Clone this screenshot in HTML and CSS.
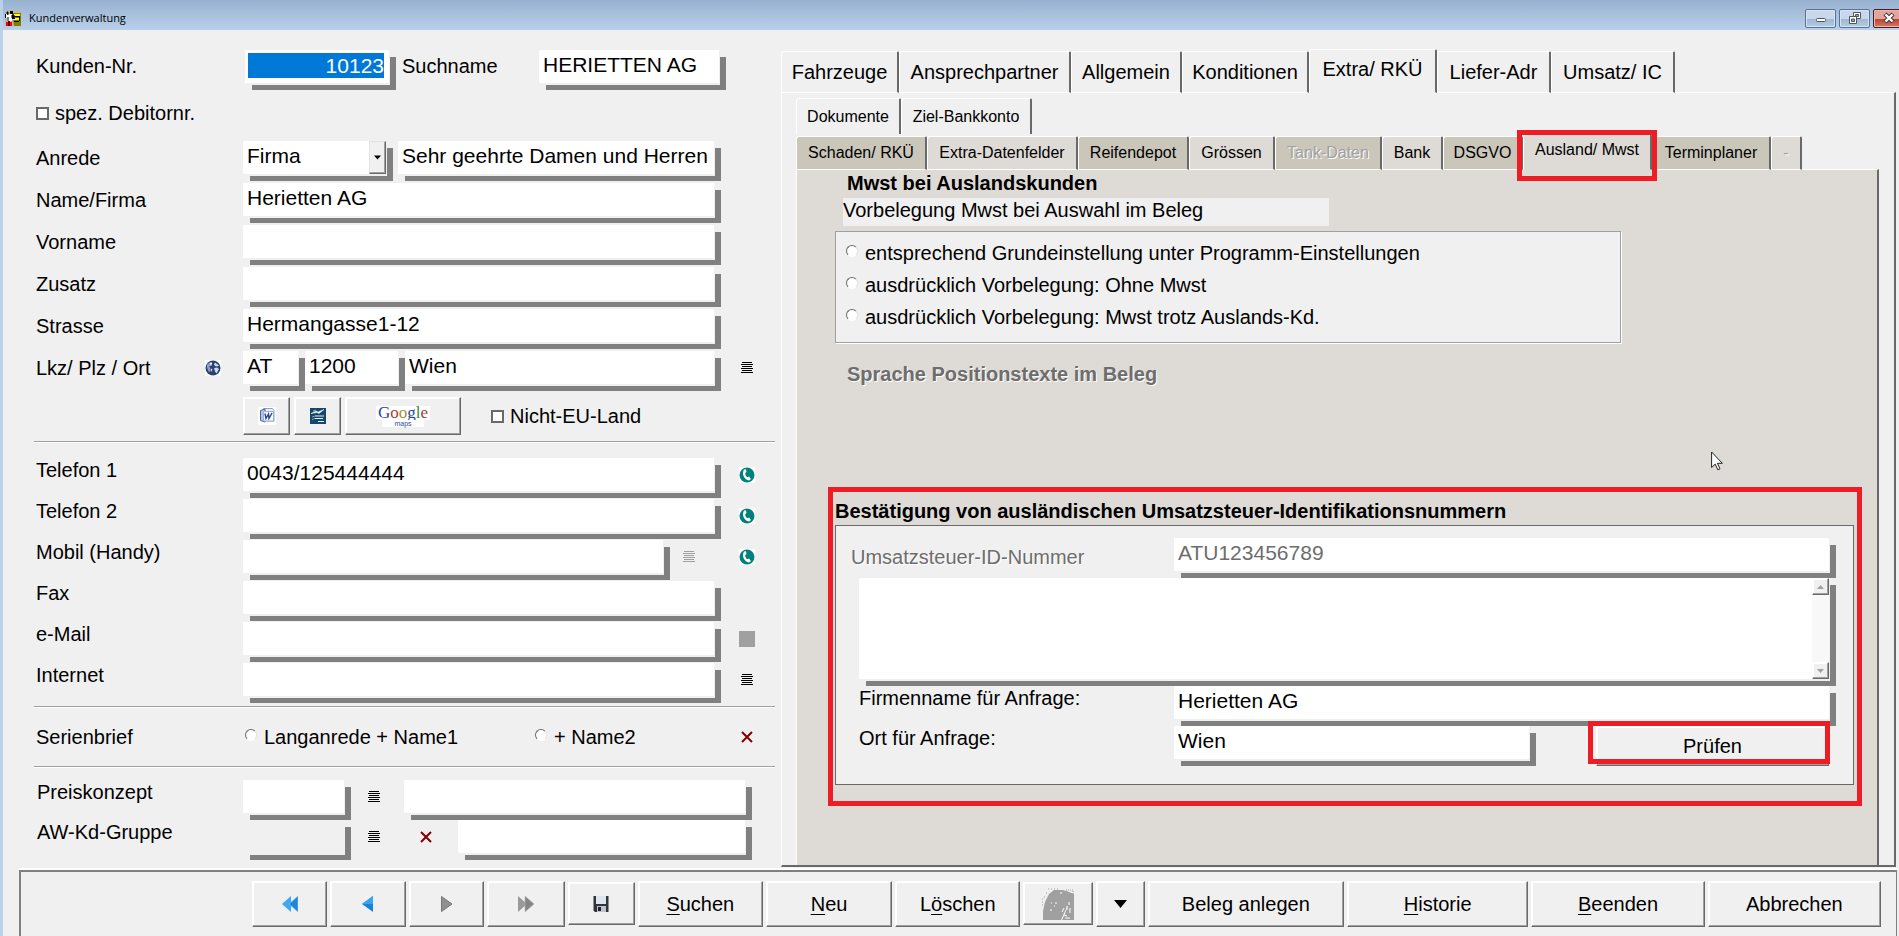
FILE: index.html
```html
<!DOCTYPE html>
<html lang="de">
<head>
<meta charset="utf-8">
<title>Kundenverwaltung</title>
<link rel="stylesheet" href="styles.css">
</head>
<body>
<svg class="sprite" aria-hidden="true">
  <symbol id="i-list" viewBox="0 0 12 12"><path d="M1 .5h10M0 2.5h12M1 4.5h10M0 6.5h12M1 8.5h10M0 10.5h12" stroke="currentColor"/></symbol>
  <symbol id="i-phone" viewBox="0 0 16 16"><path fill="#fff" d="M0 0h16v16H0z"/><circle cx="8" cy="8" r="7.5" fill="#00807c"/><path d="M5 2.500C2.500 7 5 12.500 10 13.500l2-1.500-2-2.500-1.500.7C7 9.500 6 7.500 6.300 6L7.500 5 7 2.300z" fill="#fff"/></symbol>
  <symbol id="i-x" viewBox="0 0 12 12"><path d="M1 1l10 10M11 1L1 11" stroke="#800000" stroke-width="2"/></symbol>
</svg>

<header class="titlebar">
  <svg class="app-icon" viewBox="0 0 16 16"><path fill="#b8b8b0" d="M0 0h16v16H0z"/><path fill="#808000" d="M7 3h9v13H9z"/><path fill="#ff0" d="M9 4h6v2H9zM8 8h6v2H8z"/><path d="M5 1h3v3H5zM9 6h6v1H9zM9 11h5v1H9zM14 6h1v5h-1zM0 4h1v4H0zM7 8h3v1H7z"/><path fill="#fff" d="M1 4h6v7H2V8H1z"/><path d="M2 4V2h1v3M7 5h2v3H7zM3 7v4" stroke="#000"/><path fill="#f00" d="M1 12h2v4H1zM5 12h2v4H5z"/><path fill="#600" d="M3 11h2v5H3z"/></svg>
  <h1>Kundenverwaltung</h1>
  <div class="win-buttons">
    <button class="win" aria-label="Minimieren"><svg viewBox="0 0 12 12"><rect x="1.500" y="6.500" width="9" height="3" rx="1" fill="#fff" stroke="#50555c"/></svg></button>
    <button class="win" aria-label="Wiederherstellen"><svg viewBox="0 0 12 12"><path d="M4.500.5h7v6h-7z" fill="#fff" stroke="#50555c"/><path d="M6.500 2.500h3v2h-3z" fill="#8ba5c4" stroke="#50555c"/><path d="M.5 4.500h7v7h-7z" fill="#fff" stroke="#50555c"/><path d="M2.500 7h3v2.500h-3z" fill="#8ba5c4" stroke="#50555c"/></svg></button>
    <button class="win win-close" aria-label="Schließen"><svg viewBox="0 0 12 12"><path d="M2 2l8 8M10 2l-8 8" stroke="#50353a" stroke-width="4.500"/><path d="M2.500 2.500l7 7M9.500 2.500l-7 7" stroke="#fff" stroke-width="2.400"/></svg></button>
  </div>
</header>

<main class="main">
  <form class="customer">
    <div class="group">
      <div class="row row-head">
        <label for="nr">Kunden-Nr.</label><input id="nr" class="field nr" value="10123">
        <label for="such">Suchname</label><input id="such" class="field" value="HERIETTEN AG">
      </div>
      <div class="row-check"><label class="check"><input type="checkbox"> spez. Debitornr.</label></div>
      <div class="row">
        <label for="anrede">Anrede</label>
        <div class="fields salutation">
          <div class="combo field"><select id="anrede"><option>Firma</option></select><svg class="combo-arrow" viewBox="0 0 7 4"><path d="M0 0h7L3.500 4z"/></svg></div>
          <input class="field" aria-label="Briefanrede" value="Sehr geehrte Damen und Herren">
        </div>
      </div>
      <div class="row"><label for="name">Name/Firma</label><input id="name" class="field" value="Herietten AG"></div>
      <div class="row"><label for="vor">Vorname</label><input id="vor" class="field"></div>
      <div class="row"><label for="zus">Zusatz</label><input id="zus" class="field"></div>
      <div class="row"><label for="str">Strasse</label><input id="str" class="field" value="Hermangasse1-12"></div>
      <div class="row">
        <div class="place-label"><label for="lkz">Lkz/ Plz / Ort</label>
          <button type="button" class="bare" aria-label="Land"><svg class="i16" viewBox="0 0 16 16"><path fill="#fff" d="M0 0h16v16H0z"/><circle cx="8" cy="8" r="7.500" fill="#2c3f70"/><path d="M2 4.500l3.500-2.500 2 1.500-1 2.500-2.500.5 1.500 2v3l-1.500.5-2-4z" fill="#8d9fc6"/><path d="M10 2.500l4 3-1.500 1L10 6 9 4.500zM9 8l3-.5 2 1.500-2.500 4.500-1.500-2z" fill="#cdd8ee"/><path d="M5 3l2-.5v1.500L5.500 5zM6 8.500l1.500 1-1 2.500z" fill="#fff"/></svg></button></div>
        <div class="fields place"><input id="lkz" class="field" value="AT"><input class="field" aria-label="Plz" value="1200"><input class="field" aria-label="Ort" value="Wien"></div>
        <button type="button" class="bare" aria-label="Ortsliste"><svg class="i12"><use href="#i-list"/></svg></button>
      </div>
    </div>

    <div class="tools">
      <button type="button" class="btn" aria-label="Word"><svg class="i18" viewBox="0 0 18 18"><path fill="#fff" d="M0 0h18v18H0z"/><path d="M5.500 1.500h9l1.500 2V14H5.500z" fill="#e9effa" stroke="#8ba0cb"/><path d="M2.500 3.500L7 2v13l-4.500-1.500z" fill="#b3c3e6" stroke="#4a66ab"/><path d="M5.500 4.500h10V14h-10z" fill="#f6f9ff" stroke="#9bb0da"/><path d="M7 6.500l1 5 2.500-4.500.5 4.500 3-5.500" fill="none" stroke="#29458f" stroke-width="1.400"/></svg></button>
      <button type="button" class="btn" aria-label="Writer"><svg class="i16" viewBox="0 0 16 16"><path fill="#17466b" d="M0 0h16v16H0z"/><path d="M1 5.500l5-2.500 2 1 6-2.500-5 4-2-1zM3 3l3-1" fill="#fff" stroke="#dce8f0" stroke-width=".6"/><path d="M5 8h9M5 10.500h8M8 13.500h6" stroke="#e4eef5" stroke-width="1.200"/><path d="M2 9l3-1M2 12l3-2" stroke="#7fa3bd"/></svg></button>
      <button type="button" class="btn google" aria-label="Google Maps"><span class="g-logo"><b>G</b><i>o</i><em>o</em><b>g</b><s>l</s><i>e</i></span><small>maps</small></button>
      <label class="check"><input type="checkbox"> Nicht-EU-Land</label>
    </div>
    <hr>

    <div class="group contact">
      <div class="row"><label for="t1">Telefon 1</label><input id="t1" class="field" value="0043/125444444"><button type="button" class="bare" aria-label="Telefon 1 anrufen"><svg class="i16"><use href="#i-phone"/></svg></button></div>
      <div class="row"><label for="t2">Telefon 2</label><input id="t2" class="field"><button type="button" class="bare" aria-label="Telefon 2 anrufen"><svg class="i16"><use href="#i-phone"/></svg></button></div>
      <div class="row"><label for="mob">Mobil (Handy)</label><div class="fields mobile"><input id="mob" class="field"><button type="button" class="bare off" aria-label="SMS" disabled><svg class="i12"><use href="#i-list"/></svg></button></div><button type="button" class="bare" aria-label="Mobil anrufen"><svg class="i16"><use href="#i-phone"/></svg></button></div>
      <div class="row"><label for="fax">Fax</label><input id="fax" class="field"></div>
      <div class="row"><label for="mail">e-Mail</label><input id="mail" class="field"><button type="button" class="bare" aria-label="e-Mail senden" disabled><svg class="i16" viewBox="0 0 16 16"><path fill="#a0a0a0" d="M0 0h16v16H0z"/></svg></button></div>
      <div class="row"><label for="web">Internet</label><input id="web" class="field"><button type="button" class="bare" aria-label="Internet öffnen"><svg class="i12"><use href="#i-list"/></svg></button></div>
    </div>
    <hr>

    <div class="row row-serial">
      <span>Serienbrief</span>
      <div class="fields serial"><label class="radio"><input type="radio" name="serie"> Langanrede + Name1</label><label class="radio"><input type="radio" name="serie"> + Name2</label></div>
      <button type="button" class="bare" aria-label="Serienbrief löschen"><svg class="i12"><use href="#i-x"/></svg></button>
    </div>
    <hr>

    <div class="group contact pricing">
      <div class="price-row"><label for="pk">Preiskonzept</label><input id="pk" class="field"><button type="button" class="bare" aria-label="Preisliste"><svg class="i12"><use href="#i-list"/></svg></button><input class="field" aria-label="Preiskonzept Text"></div>
      <div class="price-row"><label for="aw">AW-Kd-Gruppe</label><input id="aw" class="field locked" readonly><button type="button" class="bare" aria-label="Gruppenliste"><svg class="i12"><use href="#i-list"/></svg></button>
        <div class="fields group-text"><button type="button" class="bare" aria-label="Gruppe löschen"><svg class="i12"><use href="#i-x"/></svg></button><input class="field" aria-label="AW-Kd-Gruppe Text"></div></div>
    </div>
  </form>

  <section class="details">
    <nav class="tabs tabs-main">
      <button class="tab">Fahrzeuge</button><button class="tab">Ansprechpartner</button><button class="tab">Allgemein</button><button class="tab">Konditionen</button><button class="tab active">Extra/ RKÜ</button><button class="tab">Liefer-Adr</button><button class="tab">Umsatz/ IC</button>
    </nav>
    <div class="outer">
      <nav class="tabs tabs-docs"><button class="tab">Dokumente</button><button class="tab">Ziel-Bankkonto</button></nav>
      <nav class="tabs tabs-sub">
        <button class="tab">Schaden/ RKÜ</button><button class="tab">Extra-Datenfelder</button><button class="tab">Reifendepot</button><button class="tab">Grössen</button><button class="tab" disabled>Tank-Daten</button><button class="tab">Bank</button><button class="tab">DSGVO</button><button class="tab active">Ausland/ Mwst</button><button class="tab">Terminplaner</button><button class="tab" disabled>-</button>
      </nav>
      <div class="pane">
        <h2>Mwst bei Auslandskunden</h2>
        <p class="hint">Vorbelegung Mwst bei Auswahl im Beleg</p>
        <div class="choices">
          <label class="radio"><input type="radio" name="mwst"> entsprechend Grundeinstellung unter Programm-Einstellungen</label>
          <label class="radio"><input type="radio" name="mwst"> ausdrücklich Vorbelegung: Ohne Mwst</label>
          <label class="radio"><input type="radio" name="mwst"> ausdrücklich Vorbelegung: Mwst trotz Auslands-Kd.</label>
        </div>
        <h2 class="off-text">Sprache Positionstexte im Beleg</h2>
        <section class="confirm">
          <h3>Bestätigung von ausländischen Umsatzsteuer-Identifikationsnummern</h3>
          <div class="vat">
            <label for="ust" class="vat-id">Umsatzsteuer-ID-Nummer</label><input id="ust" class="field wide" value="ATU123456789" disabled>
            <div class="memo field"><textarea aria-label="Ergebnis"></textarea>
              <div class="scroll"><button class="btn" aria-label="Nach oben"><svg viewBox="0 0 7 4"><path d="M0 4h7L3.500 0z"/></svg></button><button class="btn" aria-label="Nach unten"><svg viewBox="0 0 7 4"><path d="M0 0h7L3.500 4z"/></svg></button></div></div>
            <label for="fa">Firmenname für Anfrage:</label><input id="fa" class="field wide" value="Herietten AG">
            <label for="oa">Ort für Anfrage:</label><input id="oa" class="field" value="Wien"><button class="btn check-btn">Prüfen</button>
          </div>
        </section>
        <svg class="cursor" viewBox="0 0 12 20"><path d="M.6 1v15.500l3.600-3.400 2.600 5.700 2.200-1-2.600-5.500h5z" fill="#fff" stroke="#222"/></svg>
      </div>
    </div>
  </section>
</main>

<footer class="actions">
  <button class="btn" aria-label="Erster"><svg class="i16" viewBox="0 0 16 16"><path d="M9 0v16L0 8z" fill="#3da9ee"/><path d="M16 0v16L7 8z" fill="#1e84dc" stroke="#8ccaf4" stroke-width=".6"/></svg></button>
  <button class="btn" aria-label="Zurück"><svg class="i16" viewBox="0 0 16 16"><path d="M13 0v16L2 8z" fill="#1683dd"/><path d="M13 0v8H2z" fill="#35a6ef"/></svg></button>
  <button class="btn" aria-label="Weiter"><svg class="i16" viewBox="0 0 16 16"><path d="M2.500.5v15L13 8z" fill="#909090" stroke="#777"/></svg></button>
  <button class="btn" aria-label="Letzter"><svg class="i16" viewBox="0 0 16 16"><path d="M0 0v16l9-8z" fill="#999"/><path d="M7 0v16l9-8z" fill="#858585" stroke="#b5b5b5" stroke-width=".6"/></svg></button>
  <button class="btn small" aria-label="Speichern"><svg class="i16" viewBox="0 0 16 16"><path d="M.5 0h15v16H2L.5 14.500z" fill="#30343c"/><path d="M3 0h10v8H3z" fill="#dfe5ec"/><path d="M4 10h9v6H4z" fill="#bfc4ca"/><path d="M5 11h3v4H5z" fill="#1e2228"/></svg></button>
  <button class="btn"><span><u>S</u>uchen</span></button>
  <button class="btn"><span><u>N</u>eu</span></button>
  <button class="btn"><span>L<u>ö</u>schen</span></button>
  <button class="btn small" aria-label="Bild"><svg class="i32" viewBox="0 0 32 32"><path d="M1 32V23L3 14l4-8 5-4h9l6 2 5 2v26H20l3-6 3-9-4 8-3 7z" fill="#a0a0a0"/><path d="M6 1h1M9 1h1M12 1h1M15 1h1M4 5h2M2 9h1M0 11h2M0 14h1M0 17h1M24 2h7v6l-4-3z" stroke="#a0a0a0" stroke-dasharray="1 1" fill="none"/><path d="M9 15h1M12 18h1M8 22h2M13 15h2M18 5h2M27 14v3M25 18v4M28 20v5M22 27l3 1M23 30h5M20 24l2-4" stroke="#fff"/></svg></button>
  <button class="btn" aria-label="Mehr"><svg class="down" viewBox="0 0 13 8"><path d="M0 0h13L6.500 8z"/></svg></button>
  <button class="btn">Beleg anlegen</button>
  <button class="btn"><span><u>H</u>istorie</span></button>
  <button class="btn"><span><u>B</u>eenden</span></button>
  <button class="btn">Abbrechen</button>
</footer>
</body>
</html>
```

FILE: styles.css
```css
* { box-sizing: border-box; }

body {
  margin: 0;
  height: 100vh;
  overflow: hidden;
  display: flex;
  flex-direction: column;
  background: #f0f0f0;
  border-left: 3px solid #b9d1ea;
  color: #000;
  font: 20px/24px "Liberation Sans", Arial, sans-serif;
}

button, input, select, textarea { font: inherit; color: inherit; margin: 0; border-radius: 0; }
button { padding: 0; }
h1, h2, h3, p { margin: 0; }
svg { display: block; }
.sprite { display: none; }
.i12 { width: 12px; height: 12px; }
.i16 { width: 16px; height: 16px; }
.i18 { width: 18px; height: 18px; }
.i32 { width: 32px; height: 32px; }

/* Title bar */
.titlebar {
  flex: none;
  height: 30px;
  margin-left: -3px;
  padding: 6px 0 0 5px;
  display: flex;
  align-items: center;
  gap: 8px;
  background: linear-gradient(#98b1cf, #b8d0ea);
}
.app-icon { width: 16px; height: 16px; }
.titlebar h1 { font: 11px/16px "Open Sans", "Noto Sans", sans-serif; }
.win-buttons { margin-left: auto; display: flex; gap: 3px; }
.win {
  width: 31px;
  height: 19px;
  display: grid;
  place-items: center;
  border: 1px solid #5a7394;
  border-radius: 2px;
  background: linear-gradient(#c8d8ea 50%, #9db6d2 50%, #b4cbe4);
  box-shadow: inset 0 0 0 1px #d5e3f3;
}
.win svg { width: 12px; height: 12px; }
.win-close {
  margin-right: -5px;
  border-color: #4a1a22;
  background: linear-gradient(#e3a59b 50%, #b8402c 50%, #d07a60);
  box-shadow: inset 0 0 0 1px #eab8ae;
}

.main {
  flex: 1;
  min-height: 0;
  display: grid;
  grid-template-columns: minmax(0, 778fr) minmax(0, 1118fr);
}

/* Shared controls */
.field {
  width: 100%;
  min-width: 0;
  height: 33px;
  border: 0;
  outline: 0;
  padding: 0 4px 4px;
  background: #fff;
  box-shadow: 1px 2px 0 #f0f0f0, 7px 7px 0 #808080;
}
.btn {
  height: 100%;
  display: grid;
  place-items: center;
  background: #f0f0f0;
  border: 1px solid;
  border-color: #fff #696969 #696969 #fff;
  box-shadow: inset -1px -1px 0 #a0a0a0, inset 1px 1px 0 #fff;
}
.bare { border: 0; background: none; display: grid; place-items: center; color: #000; }
.bare.off { color: #a0a0a0; }
.check, .radio { display: flex; align-items: center; }
.check { gap: 6px; }
.radio { gap: 7px; }
.check input {
  appearance: none;
  width: 13px;
  height: 13px;
  background: #fff;
  border: 2px solid #696969;
}
.radio input {
  appearance: none;
  flex: none;
  width: 12px;
  height: 12px;
  margin-bottom: 4px;
  border-radius: 50%;
  background: #fff;
  border: 1px solid;
  border-color: #696969 #e3e3e3 #fff #696969;
}
hr { height: 2px; margin: 0 4px 0 -2px; border: 0; border-top: 1px solid #a0a0a0; background: #fff; }

/* Customer form */
.customer { padding: 20px 2px 0 33px; }
.customer .field, .vat .field { font-size: 21px; }
.group { display: grid; gap: 9px; }
.row {
  min-height: 33px;
  display: grid;
  grid-template-columns: 207px minmax(0, 1fr) 65px;
  align-items: center;
}
.row-head { grid-template-columns: 209px 144px 150px minmax(0, 1fr); padding-right: 60px; }
.row-head label { padding-bottom: 2px; }
.row-head label + .field + label { padding-left: 13px; }
.row-head .nr {
  padding: 0;
  border: solid #fff;
  border-width: 3px 5px 5px 3px;
  background: #0078d7;
  color: #fff;
  text-align: right;
}
.row-check { height: 40px; padding-top: 2px; display: flex; align-items: center; }
.fields { display: grid; align-items: center; }
.salutation { grid-template-columns: 143px minmax(0, 1fr); gap: 12px; }
.combo { position: relative; padding: 0; }
.combo select {
  width: 100%;
  height: 33px;
  appearance: none;
  border: 0;
  background: none;
  padding: 0 20px 4px 4px;
}
.combo-arrow {
  position: absolute;
  top: 0;
  right: 0;
  width: 17px;
  height: 33px;
  padding: 4px;
  background: #f0f0f0;
  border: 1px solid;
  border-color: #e3e3e3 #696969 #696969 #e3e3e3;
  box-shadow: inset -1px -1px 0 #a0a0a0;
  pointer-events: none;
}
.place-label { display: grid; grid-template-columns: 1fr 16px 22px; gap: 8px; }
.place-label .bare { margin-left: 8px; }
.place { grid-template-columns: 55px 93px minmax(0, 1fr); gap: 7px; }
.tools { height: 38px; margin: 13px 0 6px 207px; display: flex; align-items: stretch; gap: 4px; }
.tools .btn { width: 47px; }
.tools .google { width: 116px; align-content: center; }
.tools .check { margin-left: 26px; }
.g-logo { background: #fff; padding: 0 2px; font: 17px/14px "Liberation Serif", serif; }
.g-logo * { font-style: normal; font-weight: normal; text-decoration: none; }
.g-logo b { color: #234a9c; }
.g-logo i { color: #b0392f; }
.g-logo em { color: #a3912f; }
.g-logo s { color: #3a8a45; }
.google small { font: 7px/7px "Liberation Sans", sans-serif; color: #2c4da0; background: #fff; padding: 0 12px; }
.contact { margin: 15px 0 10px; gap: 8px; }
.contact label { align-self: start; }
.mobile { grid-template-columns: minmax(0, 1fr) 51px; }
.row-serial { height: 58px; }
.serial { grid-template-columns: 290px 1fr; padding-left: 2px; }
.pricing { margin-top: 12px; gap: 7px; }
.price-row { display: grid; grid-template-columns: 207px 101px 60px minmax(0, 1fr); align-items: center; padding-right: 34px; }
.price-row label { padding-left: 1px; }
.locked { background: #f0f0f0; }
.group-text { grid-template-columns: 54px minmax(0, 1fr); }
.group-text .bare { margin-right: 10px; }

/* Tab strips */
.details { padding: 19px 3px 3px 0; display: flex; flex-direction: column; }
.tabs { display: grid; }
.tab {
  margin-top: 2px;
  background: #f0f0f0;
  border: solid;
  border-width: 1px 2px 1px 1px;
  border-color: #fff #696969 #fff #fff;
  border-radius: 3px 2px 0 0;
  white-space: nowrap;
}
.tab.active { margin-top: 0; padding-bottom: 4px; border-bottom-color: transparent; }
.tab:disabled { color: #a0a0a0; text-shadow: 1px 1px 0 #fff; }
.tabs-main { height: 44px; margin-bottom: -1px; z-index: 1; grid-template-columns: 118px 172px 111px 127px 128px 114px 124px; }
.outer {
  flex: 1;
  padding: 5px 15px 0 14px;
  display: flex;
  flex-direction: column;
  border: solid;
  border-width: 1px 2px 2px 1px;
  border-color: #fff #696969 #696969 #fff;
}
.tabs-docs, .tabs-sub { font-size: 16px; }
.tabs-docs { height: 36px; grid-template-columns: 105px 131px; }
.tabs-docs .tab { margin-top: 0; border-bottom: 0; }
.tabs-sub { height: 36px; margin-bottom: -1px; z-index: 1; grid-template-columns: 131px 151px 111px 86px 107px 61px 80px 129px 119px 31px; }
.tabs-sub .tab { background: #dedad5; }
.tabs-sub .tab:nth-child(odd) { background: #cac6ba; }
.tabs-sub .active { position: relative; border-bottom-color: #dedad5; }
.tabs-sub .active::after {
  content: "";
  position: absolute;
  inset: -5px -7px -12px -7px;
  border: 5px solid #ee1c24;
}
.pane {
  position: relative;
  flex: 1;
  padding: 1px 15px 0 31px;
  background: #dedad5;
  border: solid;
  border-width: 1px 2px 0 1px;
  border-color: #fff #696969 #696969 #fff;
}

/* Foreign VAT page */
h2 { margin-left: 19px; font-size: 20px; line-height: 24px; }
.hint { width: 47%; height: 28px; margin: 3px 0 5px 15px; background: #f0f0f0; }
.choices {
  width: 76%;
  height: 112px;
  margin-left: 7px;
  padding: 5px 10px;
  display: grid;
  align-content: start;
  grid-auto-rows: 32px;
  background: #f0f0f0;
  border: 1px solid #a0a0a0;
  box-shadow: 1px 1px 0 #fff;
}
.off-text { margin-top: 19px; color: #6d6d6d; text-shadow: 1px 1px 0 #fff; }
.confirm { margin-top: 101px; padding: 7px 3px 16px 2px; border: 5px solid #ee1c24; }
h3 { font-size: 20px; line-height: 24px; margin-bottom: 2px; }
.vat {
  padding: 12px 24px 25px 15px;
  display: grid;
  grid-template-columns: 323px minmax(0, 1fr) 233px;
  gap: 7px 0;
  background: #f0f0f0;
  border: 1px solid #696969;
}
.vat label { padding-left: 8px; }
.vat .vat-id { align-self: center; padding: 4px 0 0; color: #6d6d6d; text-shadow: 1px 1px 0 #fff; }
.vat .wide { grid-column: 2 / 4; }
.vat .field:disabled { color: #6d6d6d; }
.vat #oa { width: calc(100% - 67px); }
.memo { grid-column: 1 / 4; width: auto; margin-left: 8px; display: flex; }
.vat .memo { height: 101px; padding: 0; }
.memo textarea { flex: 1; border: 0; outline: 0; resize: none; background: none; }
.scroll { width: 17px; background: #f8f8f8; display: flex; flex-direction: column; justify-content: space-between; }
.scroll .btn { height: 17px; }
.scroll svg { width: 7px; height: 4px; fill: #a0a0a0; }
.check-btn { position: relative; }
.check-btn::after { content: ""; position: absolute; inset: -6px -2px 1px -9px; border: 5px solid #ee1c24; }
.vat .check-btn { height: 40px; margin-bottom: -7px; }
.cursor { position: absolute; left: 84.6%; top: 281px; width: 12px; height: 20px; }

/* Action bar */
.actions {
  flex: none;
  height: 66px;
  margin: 0 2px 0 16px;
  padding: 9px 15px 9px 231px;
  display: grid;
  grid-template-columns: 75fr 76fr 75fr 77fr 67fr 125fr 126fr 125fr 69fr 49fr 196fr 181fr 173fr 173fr;
  gap: 3px;
  border: solid #808080;
  border-width: 2px 1px 0 2px;
  box-shadow: 0 -2px 0 #fff;
}
.actions .small { height: 43px; margin-top: 1px; }
.actions u { text-underline-offset: 3px; text-decoration-thickness: 1px; }
.down { width: 13px; height: 8px; }
```
